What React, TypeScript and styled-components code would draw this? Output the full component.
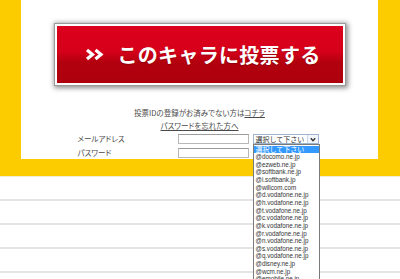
import React from 'react';
import styled, { createGlobalStyle } from 'styled-components';

const GlobalStyle = createGlobalStyle`
  html, body {
    margin: 0;
    padding: 0;
    width: 400px;
    height: 279px;
    overflow: hidden;
    background: #ffffff;
  }
  body {
    font-family: "Noto Sans CJK JP", "Liberation Sans", sans-serif;
  }
`;

const YellowFrame = styled.div`
  background: #fdcc00;
  padding: 0 22px 17px 21px;
  border-bottom: 1px solid #f3ecd8;
`;

const Panel = styled.div`
  background: #ffffff;
  height: 159px;
  box-sizing: border-box;
  padding-top: 24px;
  display: flex;
  flex-direction: column;
  align-items: center;
`;

const VoteFrame = styled.div`
  width: 290px;
  height: 61px;
  box-sizing: border-box;
  padding: 2px;
  background: #ffffff;
  box-shadow: 0 0 0 1px #9a9a9a, 1px 1px 5px 2px rgba(0, 0, 0, 0.45);
`;

const VoteButton = styled.button`
  width: 100%;
  height: 100%;
  border: none;
  padding: 0 0 0 6px;
  cursor: pointer;
  display: flex;
  align-items: center;
  justify-content: center;
  gap: 14px;
  background: linear-gradient(
    to bottom,
    #dc001c 0%,
    #d6001a 45%,
    #c40014 54%,
    #b2000e 64%,
    #ae000d 100%
  );
  color: #ffffff;
  font-family: "Noto Sans CJK JP", sans-serif;
  font-weight: 700;
  font-size: 20px;
  letter-spacing: 0.3px;
  line-height: 1;
  text-shadow: 0 1px 1px rgba(80, 0, 0, 0.35);
`;

const Chevrons = styled.svg`
  width: 19px;
  height: 13px;
  flex-shrink: 0;
`;

const Notice = styled.div`
  margin-top: 21px;
  font-size: 7.5px;
  line-height: 13px;
  color: #4a4a4a;
  text-align: center;
  font-feature-settings: "palt";
`;

const TextLink = styled.a`
  color: #4a4a4a;
  text-decoration: underline;
`;

const Form = styled.div`
  margin-top: 2px;
  margin-right: 3px;
  display: grid;
  grid-template-columns: 96px 71px 66px;
  grid-auto-rows: 10px;
  column-gap: 4px;
  row-gap: 4px;
`;

const Label = styled.div`
  font-size: 7.5px;
  line-height: 10px;
  color: #4a4a4a;
  font-feature-settings: "palt";
  white-space: nowrap;
`;

const TextBox = styled.div`
  box-sizing: border-box;
  height: 10px;
  border: 1px solid #b8b8b8;
  border-top-color: #9c9c9c;
  background: #ffffff;
`;

const SelectBox = styled.div`
  position: relative;
  box-sizing: border-box;
  height: 10px;
  border: 1px solid #9fb4cf;
  background: #ffffff;
  display: flex;
  align-items: center;
  padding-left: 2px;
  font-size: 7px;
  color: #333;
  white-space: nowrap;
`;

const SelectArrow = styled.div`
  position: absolute;
  right: 0;
  top: 0;
  bottom: 0;
  width: 10px;
  display: flex;
  align-items: center;
  justify-content: center;
  border-left: 1px solid #c9d6e6;
  background: #f2f5fa;
`;

const OptionList = styled.div`
  position: absolute;
  top: 9px;
  left: -1px;
  width: 67px;
  box-sizing: border-box;
  border: 1px solid #7a7a7a;
  background: #ffffff;
  z-index: 5;
  padding-top: 0.5px;
`;

const Option = styled.div<{ $selected?: boolean }>`
  height: 7.65px;
  line-height: 7.65px;
  padding-left: 2px;
  font-family: ${p => (p.$selected ? '"Noto Sans CJK JP", sans-serif' : '"Liberation Sans", "Noto Sans CJK JP", sans-serif')};
  font-size: ${p => (p.$selected ? '7px' : '6.3px')};
  white-space: nowrap;
  color: ${p => (p.$selected ? '#ffffff' : '#333333')};
  background: ${p => (p.$selected ? '#3399ff' : 'transparent')};
`;

const RowList = styled.div`
  display: flex;
  flex-direction: column;
`;

const Row = styled.div`
  height: 22px;
  border-bottom: 2px solid #e4e4e4;
`;

const options = [
  '@docomo.ne.jp',
  '@ezweb.ne.jp',
  '@softbank.ne.jp',
  '@i.softbank.jp',
  '@willcom.com',
  '@d.vodafone.ne.jp',
  '@h.vodafone.ne.jp',
  '@t.vodafone.ne.jp',
  '@c.vodafone.ne.jp',
  '@k.vodafone.ne.jp',
  '@r.vodafone.ne.jp',
  '@n.vodafone.ne.jp',
  '@s.vodafone.ne.jp',
  '@q.vodafone.ne.jp',
  '@disney.ne.jp',
  '@wcm.ne.jp',
  '@emobile.ne.jp',
];

export default function App() {
  return (
    <>
      <GlobalStyle />
      <YellowFrame>
        <Panel>
          <VoteFrame>
            <VoteButton>
              <Chevrons viewBox="0 0 19 13">
                <path d="M2 2 L7.5 6.5 L2 11" fill="none" stroke="#fff" strokeWidth="3.2" />
                <path d="M10.5 2 L16 6.5 L10.5 11" fill="none" stroke="#fff" strokeWidth="3.2" />
              </Chevrons>
              <span>このキャラに投票する</span>
            </VoteButton>
          </VoteFrame>

          <Notice>
            <div>
              投票IDの登録がお済みでない方は<TextLink>コチラ</TextLink>
            </div>
            <div>
              <TextLink>パスワードを忘れた方へ</TextLink>
            </div>
          </Notice>

          <Form>
            <Label>メールアドレス</Label>
            <TextBox />
            <SelectBox>
              選択して下さい
              <SelectArrow>
                <svg width="6" height="5" viewBox="0 0 6 5">
                  <path d="M0.8 1.2 L3 3.6 L5.2 1.2" fill="none" stroke="#333" strokeWidth="1.4" />
                </svg>
              </SelectArrow>
              <OptionList>
                <Option $selected>選択して下さい</Option>
                {options.map(o => (
                  <Option key={o}>{o}</Option>
                ))}
              </OptionList>
            </SelectBox>
            <Label>パスワード</Label>
            <TextBox />
          </Form>
        </Panel>
      </YellowFrame>

      <RowList>
        <Row />
        <Row />
        <Row />
        <Row />
      </RowList>
    </>
  );
}
